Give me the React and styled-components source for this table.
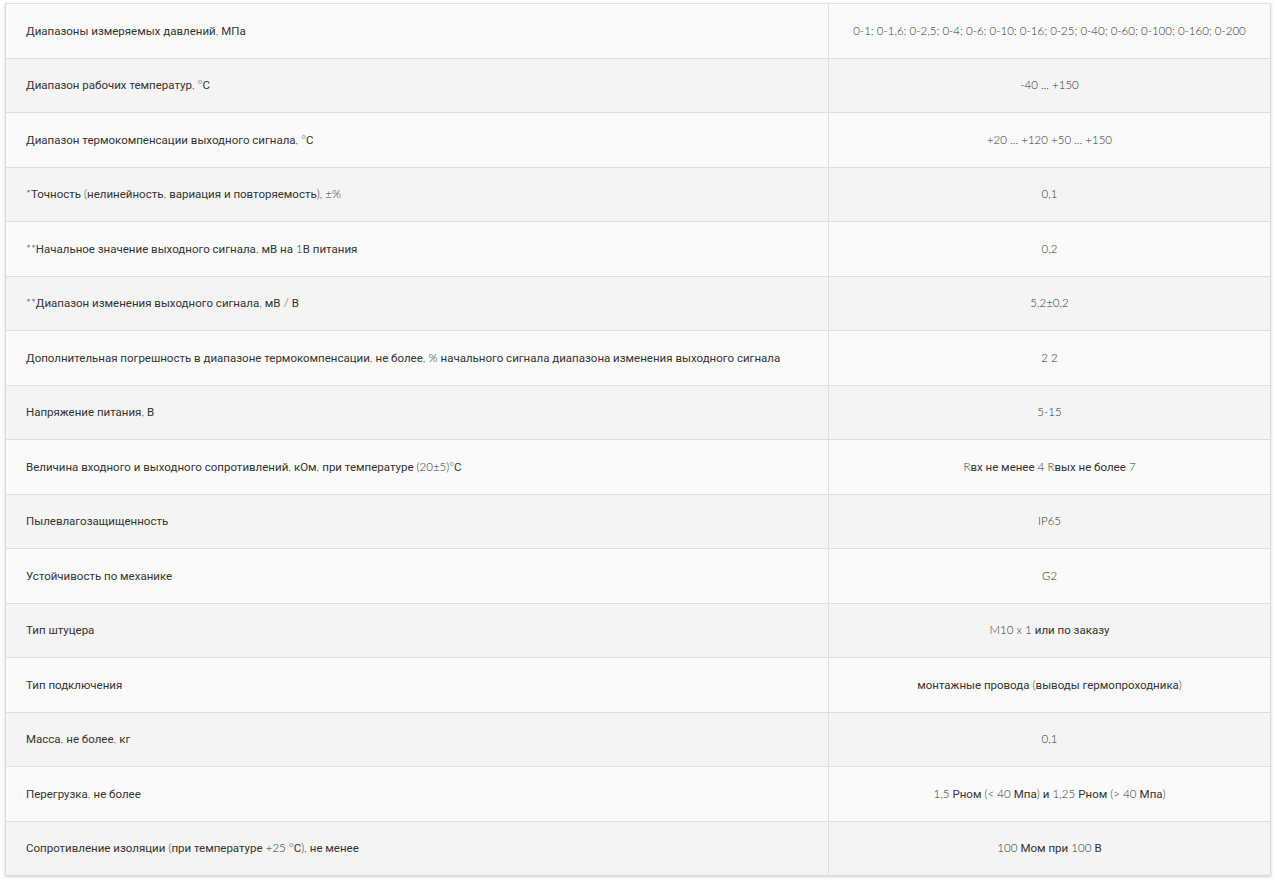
import * as React from "react"
import styled, { createGlobalStyle } from "styled-components"

const GlobalStyle = createGlobalStyle`
  body {
    margin: 0;
    background: #fff;
    font-family: "Lato", "Roboto", sans-serif;
  }
`

const Wrapper = styled.div`
  padding: 3px 6px 6px 5px;
`

const Table = styled.table`
  width: 100%;
  border-collapse: collapse;
  table-layout: fixed;
  border: 1px solid #d9d9d9;
  box-shadow: 0 1px 3px rgba(0, 0, 0, 0.18);
  font-size: 11.5px;
  font-weight: 300;
  color: #333;
`

const Row = styled.tr`
  background: ${(p) => (p.$odd ? "#fafafa" : "#f4f4f4")};
`

const Cell = styled.td`
  height: 54.5px;
  box-sizing: border-box;
  padding: ${(p) => (p.$center ? "0 8px" : "0 20px")};
  border-top: 1px solid #dedede;
  border-right: 1px solid #dedede;
  text-align: ${(p) => (p.$center ? "center" : "left")};
  width: ${(p) => (p.$center ? "auto" : "823px")};
  white-space: nowrap;
  vertical-align: middle;
  line-height: 16px;
`

const Cyr = styled.span`
  font-family: "Roboto", "Liberation Sans", sans-serif;
  font-weight: 400;
  font-size: 11.5px;
  color: #333;
`

// split text so that cyrillic runs use a different face, like the original page
const Mixed = ({ text }) => {
  const parts = text.split(/([\u0400-\u04FF]+(?:\s+[\u0400-\u04FF]+)*)/)
  return parts.map((part, i) =>
    /[\u0400-\u04FF]/.test(part) ? <Cyr key={i}>{part}</Cyr> : <React.Fragment key={i}>{part}</React.Fragment>
  )
}

const rows = [
  ["Диапазоны измеряемых давлений, МПа", "0-1; 0-1,6; 0-2,5; 0-4; 0-6; 0-10; 0-16; 0-25; 0-40; 0-60; 0-100; 0-160; 0-200"],
  ["Диапазон рабочих температур, °С", "-40 ... +150"],
  ["Диапазон термокомпенсации выходного сигнала, °С", "+20 ... +120 +50 ... +150"],
  ["*Точность (нелинейность, вариация и повторяемость), ±%", "0,1"],
  ["**Начальное значение выходного сигнала, мВ на 1В питания", "0,2"],
  ["**Диапазон изменения выходного сигнала, мВ / В", "5,2±0,2"],
  ["Дополнительная погрешность в диапазоне термокомпенсации, не более, % начального сигнала диапазона изменения выходного сигнала", "2 2"],
  ["Напряжение питания, В", "5-15"],
  ["Величина входного и выходного сопротивлений, кОм, при температуре (20±5)°С", "Rвх не менее 4 Rвых не более 7"],
  ["Пылевлагозащищенность", "IP65"],
  ["Устойчивость по механике", "G2"],
  ["Тип штуцера", "M10 x 1 или по заказу"],
  ["Тип подключения", "монтажные провода (выводы гермопроходника)"],
  ["Масса, не более, кг", "0,1"],
  ["Перегрузка, не более", "1,5 Рном (< 40 Мпа) и 1,25 Рном (> 40 Мпа)"],
  ["Сопротивление изоляции (при температуре +25 °С), не менее", "100 Мом при 100 В"],
]

const App = () => {
  return (
    <Wrapper>
      <GlobalStyle />
      <Table>
        <tbody>
          {rows.map(([name, value], i) => (
            <Row key={i} $odd={i % 2 === 0}>
              <Cell>
                <Mixed text={name} />
              </Cell>
              <Cell $center>
                <Mixed text={value} />
              </Cell>
            </Row>
          ))}
        </tbody>
      </Table>
    </Wrapper>
  )
}

export default App
